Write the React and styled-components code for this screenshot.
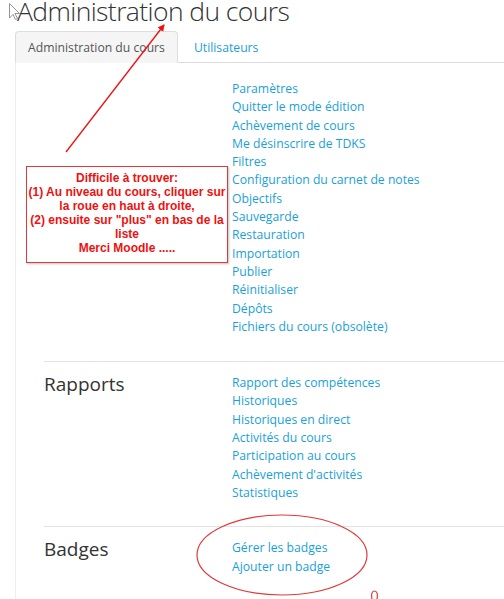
import React from "react";
import styled, { createGlobalStyle } from "styled-components";

const Global = createGlobalStyle`
  html, body { margin: 0; padding: 0; background: #fff; }
  body { font-family: "Open Sans", "Liberation Sans", sans-serif; color: #333; overflow: hidden; }
  * { box-sizing: border-box; }
`;

const Page = styled.div`
  position: relative;
  width: 504px;
  height: 599px;
  overflow: hidden;
`;

const Title = styled.h2`
  margin: -3px 0 0 0;
  padding: 0 0 0 17px;
  font-size: 26.5px;
  font-weight: 300;
  line-height: 28px;
  color: #333;
  letter-spacing: -0.6px;
  white-space: nowrap;
`;

const Tabs = styled.div`
  display: flex;
  margin: 6px 0 0 15px;
  border-bottom: 1px solid #ddd;
  height: 32px;
`;

const Tab = styled.div`
  height: 32px;
  padding: 0 ${p => (p.$active ? "12px" : "15px")};
  font-size: 12.2px;
  line-height: 31px;
  border: 1px solid ${p => (p.$active ? "#ddd" : "transparent")};
  border-bottom: ${p => (p.$active ? "1px solid #f5f5f5" : "none")};
  border-radius: 4px 4px 0 0;
  background: ${p => (p.$active ? "#f5f5f5" : "transparent")};
  color: ${p => (p.$active ? "#555" : "#1a9fd9")};
  margin-bottom: -1px;
`;

const Content = styled.div`
  margin-left: 15px;
  border-left: 1px solid #eee;
  padding: 17px 0 0 28px;
  min-height: 600px;
`;

const Section = styled.div`
  display: flex;
  padding: ${p => p.$pad || "0"};
  border-top: ${p => (p.$line ? "1px solid #e3e3e3" : "none")};
`;

const Heading = styled.h3`
  margin: -1px 0 0 0;
  width: 188px;
  flex: none;
  font-size: 19px;
  font-weight: 400;
  line-height: 22px;
  color: #333;
`;

const LinkList = styled.ul`
  list-style: none;
  margin: 0;
  padding: 0;
`;

const LinkItem = styled.li`
  font-size: 12.2px;
  line-height: 18.3px;
  color: #1a9fd9;
  white-space: nowrap;
`;

const Note = styled.div`
  position: absolute;
  left: 26px;
  top: 166px;
  width: 202px;
  height: 97px;
  border: 1.5px solid #e0393a;
  box-shadow: 1px 1px 2px rgba(0, 0, 0, 0.25);
  background: #fff;
  font-family: "Liberation Sans", Arial, sans-serif;
  font-weight: bold;
  font-size: 12px;
  color: #ee1111;
  text-align: center;
  padding-top: 4px;
`;

const NoteLine = styled.div`
  height: 14px;
  line-height: 14px;
  white-space: nowrap;
`;

const Overlay = styled.svg`
  position: absolute;
  left: 0;
  top: 0;
  pointer-events: none;
`;

const main = [
  "Paramètres",
  "Quitter le mode édition",
  "Achèvement de cours",
  "Me désinscrire de TDKS",
  "Filtres",
  "Configuration du carnet de notes",
  "Objectifs",
  "Sauvegarde",
  "Restauration",
  "Importation",
  "Publier",
  "Réinitialiser",
  "Dépôts",
  "Fichiers du cours (obsolète)",
];

const reports = [
  "Rapport des compétences",
  "Historiques",
  "Historiques en direct",
  "Activités du cours",
  "Participation au cours",
  "Achèvement d'activités",
  "Statistiques",
];

const badges = ["Gérer les badges", "Ajouter un badge"];

const noteLines = [
  "Difficile à trouver:",
  "(1) Au niveau du cours, cliquer sur",
  "la roue en haut à droite,",
  "(2) ensuite sur \"plus\" en bas de la",
  "liste",
  "Merci Moodle .....",
];

const Links = ({ items }) => (
  <LinkList>
    {items.map(t => (
      <LinkItem key={t}>{t}</LinkItem>
    ))}
  </LinkList>
);

export default function App() {
  return (
    <Page>
      <Global />
      <Title>Administration du cours</Title>
      <Tabs>
        <Tab $active>Administration du cours</Tab>
        <Tab>Utilisateurs</Tab>
      </Tabs>
      <Content>
        <Section $pad="0 0 25px 0">
          <Heading />
          <Links items={main} />
        </Section>
        <Section $line $pad="12px 0 24px 0">
          <Heading>Rapports</Heading>
          <Links items={reports} />
        </Section>
        <Section $line $pad="12px 0 24px 0">
          <Heading>Badges</Heading>
          <Links items={badges} />
        </Section>
      </Content>

      <Overlay width="504" height="599" viewBox="0 0 504 599">
        <defs>
          <marker id="ah" markerWidth="8" markerHeight="8" refX="6" refY="4" orient="auto" markerUnits="userSpaceOnUse">
            <path d="M0,0.5 L7,4 L0,7.5 z" fill="#ee1111" />
          </marker>
        </defs>
        <line x1="66" y1="152" x2="164" y2="25" stroke="#ee1111" strokeWidth="1.3" markerEnd="url(#ah)" />
        <ellipse cx="282" cy="555" rx="85" ry="40" fill="none" stroke="#e0393a" strokeWidth="1.2" />
        <path d="M372,599 C371,594 372,591 374.5,591 C377,591 378,594 377,599" fill="none" stroke="#e0393a" strokeWidth="1.2" />
        <path d="M9.5,3.5 L9.5,18 L13,14.5 L15.5,19.5 L17.5,18.5 L15,13.5 L19.5,13.5 Z" fill="#fff" stroke="#888" strokeWidth="0.9" strokeLinejoin="round" />
      </Overlay>

      <Note>
        {noteLines.map(l => (
          <NoteLine key={l}>{l}</NoteLine>
        ))}
      </Note>
    </Page>
  );
}
